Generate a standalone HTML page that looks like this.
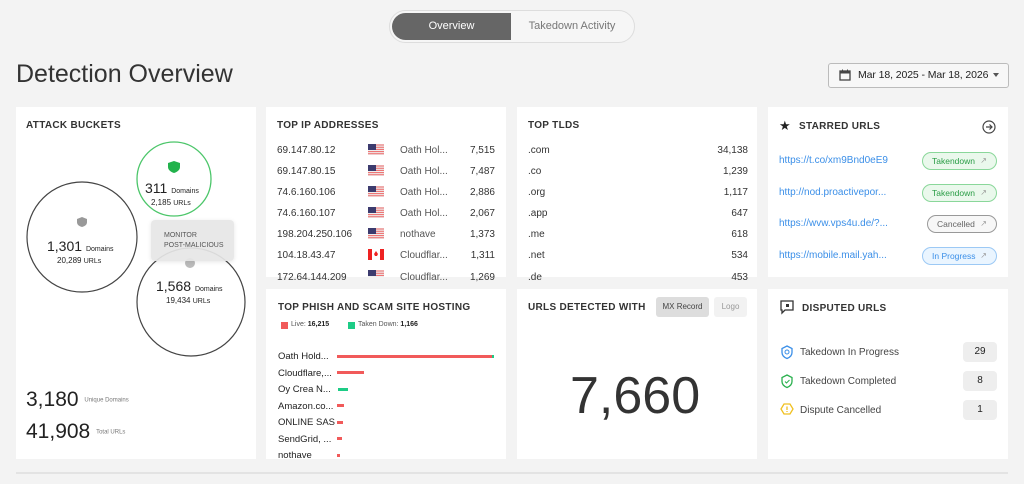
<!DOCTYPE html>
<html><head><meta charset="utf-8"><style>
*{margin:0;padding:0;box-sizing:border-box}
body{width:1024px;height:484px;background:#f3f3f3;font-family:"Liberation Sans",sans-serif;color:#222;position:relative;overflow:hidden}
.a{position:absolute;white-space:nowrap}
.card{position:absolute;background:#fff}
.t{position:absolute;font-size:10px;font-weight:bold;letter-spacing:.3px;color:#333}
.s{font-size:10px;color:#333}
.bar{position:absolute;height:3px;background:#f15a5a}
.badge{position:absolute;left:922px;width:75px;height:18px;border-radius:9px;font-size:8.5px;padding-left:9px;line-height:16px}
.badge:after{content:"↗";position:absolute;right:9px;font-size:8px;color:#999}
.cnt{position:absolute;left:963px;width:34px;height:20px;background:#eee;border-radius:4px;font-size:10px;text-align:center;line-height:20px}
</style></head><body>
<div class="a" style="left:389px;top:10px;width:246px;height:33px;border:1px solid #ddd;border-radius:17px;background:#f6f6f6"></div>
<div class="a" style="left:392px;top:13px;width:119px;height:27px;background:#666;border-radius:14px 0 0 14px;color:#fff;font-size:11px;text-align:center;line-height:27px">Overview</div>
<div class="a" style="left:512px;top:13px;width:120px;height:27px;color:#777;font-size:11px;text-align:center;line-height:27px">Takedown Activity</div>
<div class="a" style="left:16px;top:60px;font-size:25px;color:#333">Detection Overview</div>
<div class="a" style="left:828px;top:63px;width:181px;height:25px;border:1px solid #bbb;border-radius:3px;background:#f7f7f7"></div>
<svg class="a" style="left:839px;top:69px" width="12" height="12" viewBox="0 0 12 12"><rect x="1" y="2" width="10" height="9" fill="none" stroke="#444" stroke-width="1.3"/><rect x="1" y="2" width="10" height="2.5" fill="#444"/><path d="M3.5 0.5v2M8.5 0.5v2" stroke="#444"/></svg>
<div class="a" style="left:858px;top:69px;font-size:10.5px;color:#222;letter-spacing:-0.1px">Mar 18, 2025 - Mar 18, 2026</div>
<div class="a" style="left:993px;top:73px;border:3.5px solid transparent;border-top:4px solid #555"></div>

<div class="card" style="left:16px;top:107px;width:240px;height:352px"></div>
<div class="t" style="left:26px;top:120px">ATTACK BUCKETS</div>
<svg class="a" style="left:16px;top:107px" width="240" height="260">
<circle cx="66" cy="130" r="55" fill="none" stroke="#444" stroke-width="1.2"/>
<circle cx="158" cy="72" r="37" fill="none" stroke="#4cc66a" stroke-width="1.3"/>
<circle cx="175" cy="195" r="54" fill="none" stroke="#444" stroke-width="1.2"/>
<path d="M158 54l6 2v4c0 3-3 5-6 6c-3-1-6-3-6-6v-4z" fill="#22b24c"/>
<path d="M66 110l5 2v3c0 3-2 4-5 5c-3-1-5-2-5-5v-3z" fill="#999"/>
<circle cx="174" cy="156" r="5" fill="#bbb"/>
</svg>
<div class="a" style="left:145px;top:180px;font-size:14px">311 <span style="font-size:7px">Domains</span></div>
<div class="a" style="left:151px;top:198px;font-size:8px">2,185 <span style="font-size:7px">URLs</span></div>
<div class="a" style="left:47px;top:238px;font-size:14px">1,301 <span style="font-size:7px">Domains</span></div>
<div class="a" style="left:57px;top:256px;font-size:8px">20,289 <span style="font-size:7px">URLs</span></div>
<div class="a" style="left:151px;top:220px;width:83px;height:41px;background:rgba(230,230,230,.92);border-radius:4px;font-size:7px;color:#555;padding:11px 0 0 13px;line-height:10px;box-shadow:0 1px 4px rgba(0,0,0,.1)">MONITOR<br>POST-MALICIOUS</div>
<div class="a" style="left:156px;top:278px;font-size:14px">1,568 <span style="font-size:7px">Domains</span></div>
<div class="a" style="left:166px;top:296px;font-size:8px">19,434 <span style="font-size:7px">URLs</span></div>
<div class="a" style="left:26px;top:388px;font-size:21px">3,180 <span style="font-size:6px;color:#777;vertical-align:middle">Unique Domains</span></div>
<div class="a" style="left:26px;top:420px;font-size:21px">41,908 <span style="font-size:6px;color:#777;vertical-align:middle">Total URLs</span></div>

<div class="card" style="left:266px;top:107px;width:240px;height:170px"></div>
<div class="t" style="left:277px;top:120px">TOP IP ADDRESSES</div>
<div class="a s" style="left:277px;top:140px;line-height:21.1px">69.147.80.12<br>69.147.80.15<br>74.6.160.106<br>74.6.160.107<br>198.204.250.106<br>104.18.43.47<br>172.64.144.209</div>
<div class="a s" style="left:400px;top:140px;line-height:21.1px;color:#555">Oath Hol...<br>Oath Hol...<br>Oath Hol...<br>Oath Hol...<br>nothave<br>Cloudflar...<br>Cloudflar...</div>
<div class="a s" style="left:450px;width:45px;text-align:right;top:140px;line-height:21.1px">7,515<br>7,487<br>2,886<br>2,067<br>1,373<br>1,311<br>1,269</div>
<svg class="a" style="left:368px;top:143px" width="17" height="134">
<defs><g id="us"><rect width="16" height="11" fill="#eee"/><path d="M0 1h16M0 3.2h16M0 5.4h16M0 7.6h16M0 9.8h16" stroke="#e66" stroke-width="1"/><rect width="8" height="6" fill="#3c3b6e"/></g></defs>
<use href="#us" y="1"/><use href="#us" y="22"/><use href="#us" y="43"/><use href="#us" y="64"/><use href="#us" y="85"/>
<rect y="106" width="16" height="11" fill="#fff"/><rect y="106" width="4" height="11" fill="#e22"/><rect x="12" y="106" width="4" height="11" fill="#e22"/><path d="M8 108l2 3l-1 2h-2l-1-2z" fill="#e22"/>
<use href="#us" y="127"/></svg>

<div class="card" style="left:266px;top:289px;width:240px;height:170px"></div>
<div class="t" style="left:278px;top:302px">TOP PHISH AND SCAM SITE HOSTING</div>
<div class="a" style="left:281px;top:322px;width:7px;height:7px;background:#f15a5a"></div>
<div class="a" style="left:291px;top:321px;font-size:7px;color:#555">Live: <b style="color:#222">16,215</b></div>
<div class="a" style="left:348px;top:322px;width:7px;height:7px;background:#1dcc86"></div>
<div class="a" style="left:358px;top:321px;font-size:7px;color:#555">Taken Down: <b style="color:#222">1,166</b></div>
<div class="a" style="left:278px;top:349px;font-size:9.5px;line-height:16.5px;color:#222">Oath Hold...<br>Cloudflare,...<br>Oy Crea N...<br>Amazon.co...<br>ONLINE SAS<br>SendGrid, ...<br>nothave</div>
<div class="bar" style="left:337px;top:355px;width:155px"></div><div class="bar" style="left:492px;top:355px;width:2px;background:#1dcc86"></div>
<div class="bar" style="left:337px;top:371px;width:27px"></div>
<div class="bar" style="left:338px;top:388px;width:10px;background:#1dcc86"></div>
<div class="bar" style="left:337px;top:404px;width:7px"></div>
<div class="bar" style="left:337px;top:421px;width:6px"></div>
<div class="bar" style="left:337px;top:437px;width:5px"></div>
<div class="bar" style="left:337px;top:454px;width:3px"></div>

<div class="card" style="left:517px;top:107px;width:240px;height:170px"></div>
<div class="t" style="left:528px;top:120px">TOP TLDS</div>
<div class="a s" style="left:528px;top:140px;line-height:21.1px">.com<br>.co<br>.org<br>.app<br>.me<br>.net<br>.de</div>
<div class="a s" style="left:680px;width:68px;text-align:right;top:140px;line-height:21.1px">34,138<br>1,239<br>1,117<br>647<br>618<br>534<br>453</div>
<div class="card" style="left:517px;top:289px;width:240px;height:170px"></div>
<div class="t" style="left:528px;top:302px">URLS DETECTED WITH</div>
<div class="a" style="left:656px;top:297px;width:53px;height:20px;background:#ddd;border-radius:3px;font-size:8px;text-align:center;line-height:20px;color:#444">MX Record</div>
<div class="a" style="left:714px;top:297px;width:33px;height:20px;background:#f2f2f2;border-radius:3px;font-size:8px;text-align:center;line-height:20px;color:#999">Logo</div>
<div class="a" style="left:570px;top:366px;font-size:52px;color:#333">7,660</div>

<div class="card" style="left:768px;top:107px;width:240px;height:170px"></div>
<div class="a" style="left:779px;top:118px;font-size:13px">★</div>
<div class="t" style="left:799px;top:121px">STARRED URLS</div>
<svg class="a" style="left:982px;top:120px" width="14" height="14"><circle cx="7" cy="7" r="6" fill="none" stroke="#444" stroke-width="1.2"/><path d="M4 7h6M7.5 4.5L10 7l-2.5 2.5" fill="none" stroke="#444" stroke-width="1.2"/></svg>
<div class="a" style="left:779px;top:145px;font-size:10px;color:#3b8fe8;line-height:31.5px">https://t.co/xm9Bnd0eE9<br>http://nod.proactivepor...<br>https://wvw.vps4u.de/?...<br>https://mobile.mail.yah...</div>
<div class="badge" style="top:152px;background:#eaf8ec;border:1px solid #8ad79a;color:#2a9d46">Takendown</div>
<div class="badge" style="top:184px;background:#eaf8ec;border:1px solid #8ad79a;color:#2a9d46">Takendown</div>
<div class="badge" style="top:215px;left:927px;width:70px;background:#f7f7f7;border:1px solid #999;color:#666">Cancelled</div>
<div class="badge" style="top:247px;background:#eaf5ff;border:1px solid #9cc9f5;color:#3b8fe8">In Progress</div>

<div class="card" style="left:768px;top:289px;width:240px;height:170px"></div>
<svg class="a" style="left:780px;top:300px" width="14" height="15"><path d="M1 1h12v9H5l-3 3v-3H1z" fill="none" stroke="#333" stroke-width="1.3"/><rect x="6" y="4" width="3" height="3" fill="#333"/></svg>
<div class="t" style="left:802px;top:303px">DISPUTED URLS</div>
<svg class="a" style="left:780px;top:345px" width="14" height="75"><path d="M7 1l5 2.5v4c0 3-2.5 5-5 6c-2.5-1-5-3-5-6v-4z" fill="none" stroke="#3b8fe8" stroke-width="1.3"/><circle cx="7" cy="7" r="2" fill="none" stroke="#3b8fe8"/>
<path d="M7 30l5 2.5v4c0 3-2.5 5-5 6c-2.5-1-5-3-5-6v-4z" fill="none" stroke="#2ab04e" stroke-width="1.3"/><path d="M5 36.5l1.5 1.5l3-3" fill="none" stroke="#2ab04e"/>
<path d="M4 59h6l3 5l-3 5h-6l-3-5z" fill="none" stroke="#f0c020" stroke-width="1.3"/><path d="M7 61.5v3.5M7 66v1" stroke="#f0c020" stroke-width="1.3"/></svg>
<div class="a" style="left:800px;top:338px;font-size:10px;color:#444;line-height:29px">Takedown In Progress<br>Takedown Completed<br>Dispute Cancelled</div>
<div class="cnt" style="top:342px">29</div>
<div class="cnt" style="top:371px">8</div>
<div class="cnt" style="top:400px">1</div>
<div class="a" style="left:16px;top:472px;width:992px;height:2px;background:#e3e3e3"></div>
</body></html>
